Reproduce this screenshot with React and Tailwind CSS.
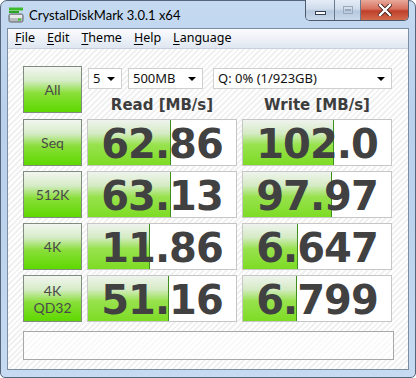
import React from "react";

const hatch =
  "bg-[repeating-linear-gradient(135deg,#ffffff_0px,#ffffff_2px,#f1f1f1_2px,#f1f1f1_4px)]";

function Label({ children }) {
  return (
    <div className="w-[59px] h-[47px] border border-[#7f8c7f] bg-[linear-gradient(to_bottom,#f2f6f0_0%,#d6ecc8_30%,#8adf3a_58%,#5ed800_100%)] flex flex-col items-center justify-center text-[#4a4a4a] text-[14px] leading-[17px] font-['Lato',sans-serif]">
      {children}
    </div>
  );
}

function Cell({ value, pct }) {
  return (
    <div className="relative w-[150px] h-[47px] border border-[#c6c6c6] bg-white overflow-hidden">
      <div
        className="absolute left-0 top-0 bottom-0 bg-[linear-gradient(to_bottom,#f0f3ee_0%,#d4ebc4_30%,#98e24e_55%,#7ddc24_100%)] border-r border-[#3f8f1e]"
        style={{ width: `${pct}px` }}
      />
      <div className="relative h-full pt-[3px] flex items-center justify-center font-['DejaVu_Sans',sans-serif] font-bold text-[40px] leading-none text-[#414141] tracking-[-1px]">
        {value}
      </div>
    </div>
  );
}

function Select({ w, text }) {
  return (
    <div
      className={`h-[21px] border border-[#cfcfcf] bg-white flex items-center justify-between pl-[4px] pr-[6px] text-[13px] text-[#111] font-['Noto_Sans',sans-serif] ${w}`}
    >
      <span className="leading-none">{text}</span>
      <span className="w-0 h-0 border-l-[4px] border-r-[4px] border-t-[4px] border-l-transparent border-r-transparent border-t-black" />
    </div>
  );
}

function MenuItem({ first, rest }) {
  return (
    <span>
      <span className="underline underline-offset-2">{first}</span>
      {rest}
    </span>
  );
}

export default function App() {
  return (
    <div className="w-[416px] h-[378px] overflow-hidden">
      <div className="w-[416px] h-[378px] flex flex-col border border-[#55667c] rounded-t-[7px] rounded-b-[5px] bg-[linear-gradient(to_bottom,#c5daf1_0%,#b9d1ec_30%,#bcd3ed_60%,#c6dbf2_100%)] px-[6px] pb-[7px]">
        {/* title bar */}
        <div className="h-[27px] flex items-start">
          <div className="mt-[6px] ml-[1px] w-[16px] h-[16px]">
            <svg width="16" height="16" viewBox="0 0 16 16">
              <rect x="1" y="0.5" width="14" height="3" fill="#3dba2c" />
              <rect x="1" y="4" width="10" height="2" fill="#29a51f" />
              <rect x="1" y="7" width="14" height="8" rx="1.5" fill="#b8bcc0" stroke="#5d6368" strokeWidth="1" />
              <rect x="2" y="8" width="12" height="3" fill="#e6e8ea" />
              <rect x="10" y="11.5" width="3" height="2" fill="#3cc22a" />
            </svg>
          </div>
          <div className="ml-[5px] mt-[6px] text-[13px] leading-[16px] text-black font-['Lato',sans-serif]">
            CrystalDiskMark 3.0.1 x64
          </div>
          <div className="flex-1" />
          <div className="-mt-[1px] flex h-[21px] border border-t-0 border-[#4d5b6d] rounded-b-[5px] overflow-hidden">
            <div className="w-[29px] h-full bg-[linear-gradient(to_bottom,#e4ecf6_0%,#cfdcec_45%,#b6c8de_55%,#c9d9ec_100%)] flex items-center justify-center border-r border-[#6a7a8e]">
              <div className="w-[11px] h-[4px] bg-white border border-[#34404f] mt-[5px]" />
            </div>
            <div className="w-[26px] h-full bg-[linear-gradient(to_bottom,#e4ecf6_0%,#cfdcec_45%,#b6c8de_55%,#c9d9ec_100%)] flex items-center justify-center border-r border-[#6a7a8e]">
              <div className="w-[10px] h-[8px] border border-[#9aa8b8] flex items-center justify-center">
                <div className="w-[6px] h-[2px] border border-[#9aa8b8]" />
              </div>
            </div>
            <div className="w-[47px] h-full bg-[linear-gradient(to_bottom,#e8a99a_0%,#d7705d_45%,#c0402a_55%,#d26a4e_100%)] flex items-center justify-center">
              <svg width="14" height="12" viewBox="0 0 14 12">
                <path d="M2 1 L12 11 M12 1 L2 11" stroke="#3a1a14" strokeWidth="4" strokeLinecap="square" />
                <path d="M2 1 L12 11 M12 1 L2 11" stroke="#ffffff" strokeWidth="2.4" strokeLinecap="square" />
              </svg>
            </div>
          </div>
        </div>

        {/* client area */}
        <div className="flex-1 flex flex-col border border-[#7d8ea3] bg-white">
          <div className="h-[20px] flex items-center gap-[12px] pl-[7px] border-b border-[#c6cfdc] bg-[linear-gradient(to_bottom,#fafbfd_0%,#eef2f8_50%,#dfe6f0_100%)] text-[12.5px] text-black font-['Noto_Sans',sans-serif]">
            <MenuItem first="F" rest="ile" />
            <MenuItem first="E" rest="dit" />
            <MenuItem first="T" rest="heme" />
            <MenuItem first="H" rest="elp" />
            <MenuItem first="L" rest="anguage" />
          </div>
          <div className={`flex-1 ${hatch} pl-[15px] pt-[17px] flex flex-col gap-[5px]`}>
            <div className="flex gap-[5px]">
              <Label>All</Label>
              <div className="flex flex-col">
                <div className="flex pt-[2px] pl-[1px]">
                  <Select w="w-[34px]" text="5" />
                  <div className="w-[6px]" />
                  <Select w="w-[75px]" text="500MB" />
                  <div className="w-[10px]" />
                  <Select w="w-[179px]" text="Q: 0% (1/923GB)" />
                </div>
                <div className="flex gap-[5px] mt-[7px] text-[15px] leading-[18px] font-bold text-[#3d3d3d] font-['DejaVu_Sans',sans-serif]">
                  <div className="w-[150px] text-center">Read [MB/s]</div>
                  <div className="w-[150px] text-center">Write [MB/s]</div>
                </div>
              </div>
            </div>
            <div className="flex gap-[5px]">
              <Label>Seq</Label>
              <Cell value="62.86" pct={83} />
              <Cell value="102.0" pct={91} />
            </div>
            <div className="flex gap-[5px]">
              <Label>512K</Label>
              <Cell value="63.13" pct={83} />
              <Cell value="97.97" pct={89} />
            </div>
            <div className="flex gap-[5px]">
              <Label>4K</Label>
              <Cell value="11.86" pct={62} />
              <Cell value="6.647" pct={55} />
            </div>
            <div className="flex gap-[5px]">
              <Label>
                <span>4K</span>
                <span>QD32</span>
              </Label>
              <Cell value="51.16" pct={81} />
              <Cell value="6.799" pct={54} />
            </div>
            <div className="mt-[4px] w-[371px] h-[29px] border border-[#a8a8a8] bg-white/60" />
          </div>
        </div>
      </div>
    </div>
  );
}
